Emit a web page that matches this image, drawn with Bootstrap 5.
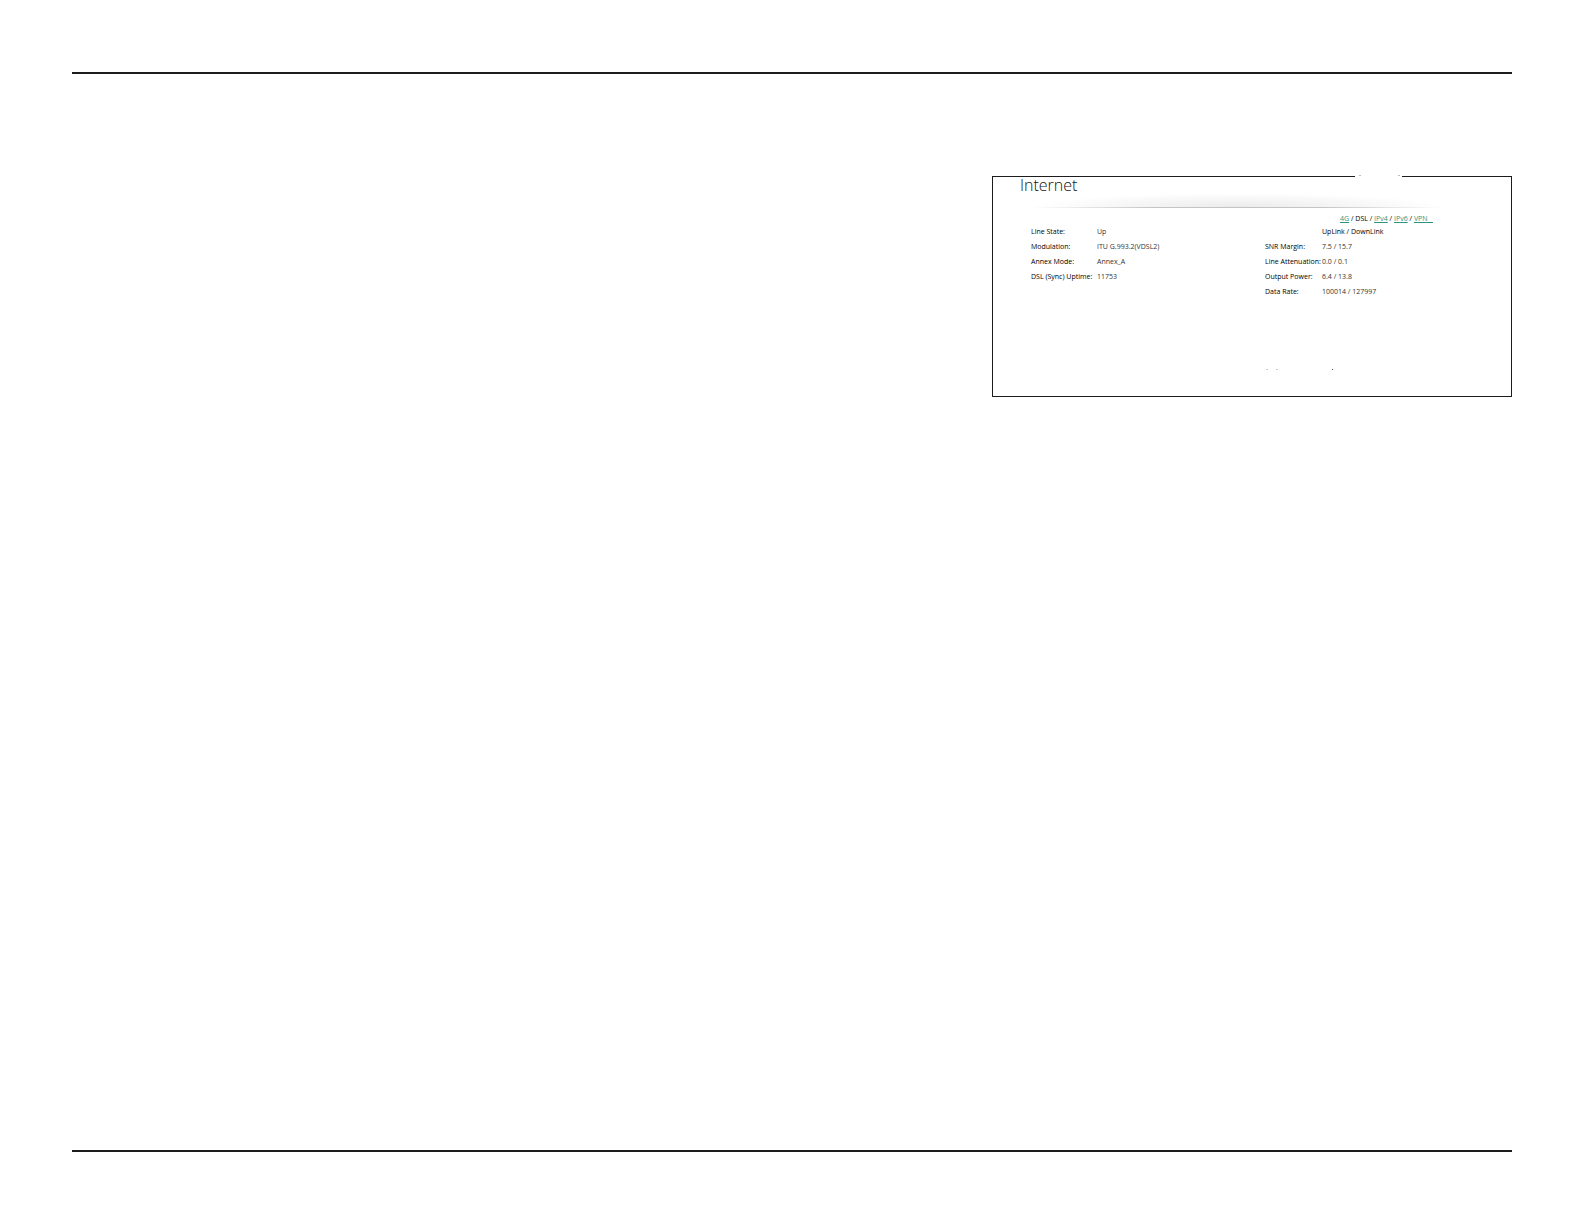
<!DOCTYPE html>
<html lang="en">
<head>
<meta charset="utf-8">
<meta name="viewport" content="width=device-width, initial-scale=1">
<title>Internet</title>
<link href="https://cdn.jsdelivr.net/npm/bootstrap@5.3.0/dist/css/bootstrap.min.css" rel="stylesheet">
<style>
body { background: #fff; color: #222; font-family: "Open Sans", Lato, sans-serif; }
.sheet { padding: 72px; }
.sheet-body { border-top: 2px solid #1c1c1e; border-bottom: 2px solid #1c1c1e; min-height: calc(100vh - 144px); padding-top: 102px; }
.panel { width: 520px; max-width: 100%; height: 221px; border: 1px solid #1c1c1e; }
.panel-title { font-size: 16px; line-height: 16px; font-weight: 300; color: #111; padding-left: 27px; }
.fade-bar { height: 15px; margin: 0 68px 0 40px; background: radial-gradient(ellipse 50% 100% at 50% 100%, #ebebeb, #fff); border-bottom: 1px solid; border-image: linear-gradient(90deg, #fff, #c4c4c4 30%, #c4c4c4 70%, #fff) 1; }
.tabs-line { font-size: 7px; line-height: 10px; padding: 6px 78px 0 0; font-weight: 500; color: #000; }
.tabs-line a { color: #2f9482; }
.stats { padding-left: 38px; font-size: 7px; line-height: 15px; }
.stats table { table-layout: fixed; }
.stats th, .stats td { padding: 0; height: 15px; white-space: nowrap; }
.stats th { font-weight: 500; color: #000; }
.stats td { color: #333; }
.line-table { width: 234px; }
.line-table th { width: 66px; }
.rate-table { width: 170px; }
.rate-table th { width: 57px; }
.rate-table thead th { width: 113px; }
.rate-table thead td { width: 57px; }
.notch { left: 362px; top: -2px; }
.specks { left: 272px; top: 190px; }
</style>
<script src="https://cdn.jsdelivr.net/npm/bootstrap@5.3.0/dist/js/bootstrap.bundle.min.js"></script>
</head>
<body>
<main class="sheet">
  <div class="sheet-body">
    <section class="panel position-relative ms-auto">
      <svg class="notch position-absolute" width="47" height="3" aria-hidden="true"><rect width="47" height="3" fill="#fff"/><path d="M4 .5h2M43 .5h2" stroke="#bbb"/></svg>
      <h1 class="panel-title m-0">Internet</h1>
      <div class="fade-bar"></div>
      <nav class="tabs-line text-end" aria-label="Connection"><a href="#">4G</a> / DSL / <a href="#">IPv4</a> / <a href="#">IPv6</a> / <a href="#">VPN&nbsp;&nbsp;&nbsp;</a></nav>
      <div class="stats d-flex align-items-start">
        <table class="line-table">
          <tbody>
            <tr><th scope="row">Line State:</th><td>Up</td></tr>
            <tr><th scope="row">Modulation:</th><td>ITU G.993.2(VDSL2)</td></tr>
            <tr><th scope="row">Annex Mode:</th><td>Annex_A</td></tr>
            <tr><th scope="row">DSL (Sync) Uptime:</th><td>11753</td></tr>
          </tbody>
        </table>
        <table class="rate-table">
          <thead><tr><td></td><th scope="col">UpLink / DownLink</th></tr></thead>
          <tbody>
            <tr><th scope="row">SNR Margin:</th><td>7.5 / 15.7</td></tr>
            <tr><th scope="row">Line Attenuation:</th><td>0.0 / 0.1</td></tr>
            <tr><th scope="row">Output Power:</th><td>6.4 / 13.8</td></tr>
            <tr><th scope="row">Data Rate:</th><td>100014 / 127997</td></tr>
          </tbody>
        </table>
      </div>
      <svg class="specks position-absolute" width="70" height="5" aria-hidden="true"><path d="M1 2.5h2M11 2.5h2" stroke="#ccc"/><path d="M67 2.5h1" stroke="#555"/></svg>
    </section>
  </div>
</main>
</body>
</html>
